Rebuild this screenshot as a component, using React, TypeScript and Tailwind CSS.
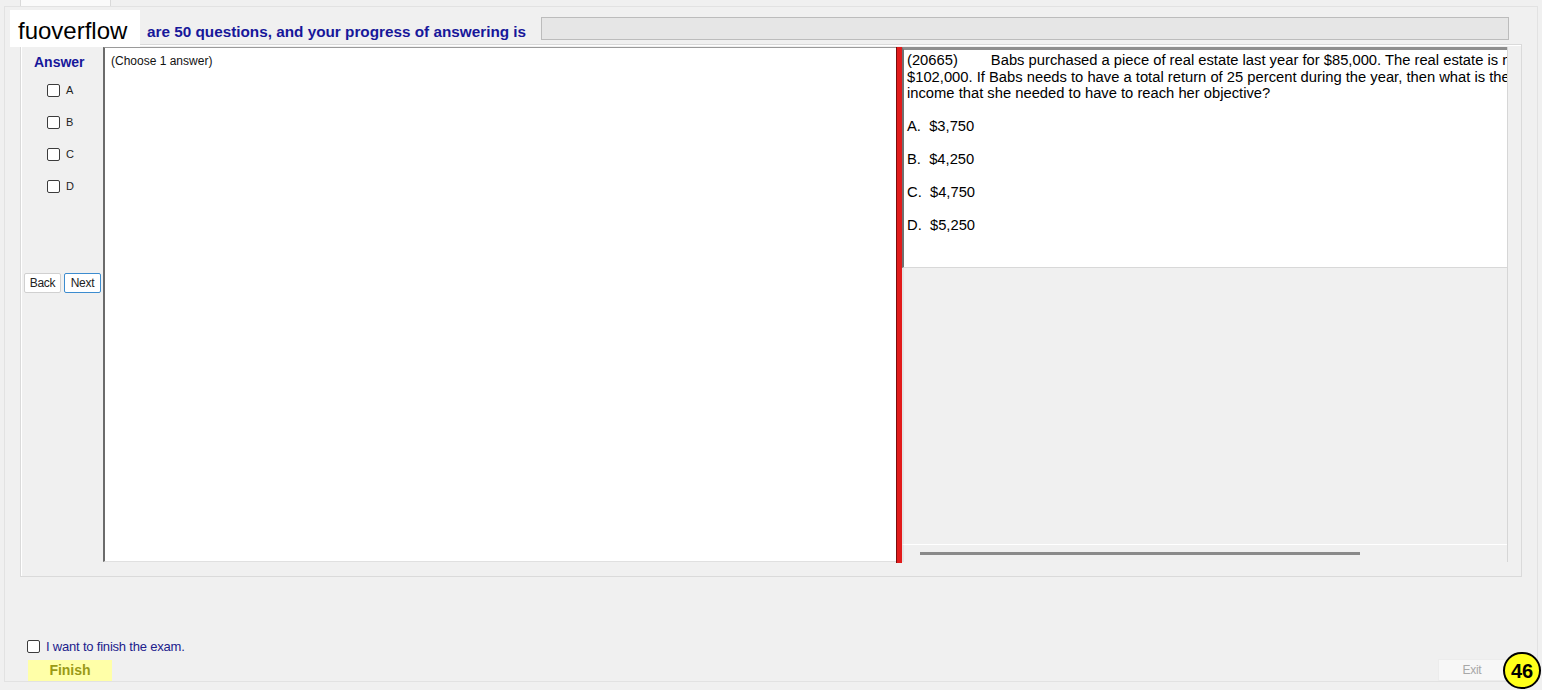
import React from 'react';

const Box: React.FC<{ className?: string }> = ({ className = '' }) => (
  <div className={`w-[13px] h-[13px] rounded-[2px] border border-[#3c3c3c] bg-white ${className}`} />
);

const App: React.FC = () => {
  const choices = ['A', 'B', 'C', 'D'];
  const options = ['A.  $3,750', 'B.  $4,250', 'C.  $4,750', 'D.  $5,250'];

  return (
    <div className="relative w-[1542px] h-[690px] overflow-hidden bg-[#f0f0f0] font-['Liberation_Sans',Arial,sans-serif] text-black">
      {/* tab strip */}
      <div className="flex h-[6px] pl-[20px]">
        <div className="w-[91px] h-full bg-[#fafafa] border-x border-[#d9d9d9]" />
      </div>

      {/* tab page */}
      <div className="mx-[4px] h-[676px] flex flex-col border border-[#e2e2e2] bg-[#f0f0f0]">
        {/* header */}
        <div className="flex h-[23px] mt-[10px]">
          <div className="self-end pl-[142px] w-[536px] shrink-0 text-[15.3px] leading-[17px] font-bold text-[#17179a] whitespace-nowrap">
            are 50 questions, and your progress of answering is
          </div>
          <div className="w-[968px] h-[23px] bg-[#e6e6e6] border border-[#bcbcbc]" />
        </div>

        {/* group panel */}
        <div className="ml-[15px] mt-[4px] w-[1502px] h-[533px] border border-[#dadada] shadow-[inset_1px_1px_0_#ffffff] flex pt-[2px]">
          {/* left column */}
          <div className="w-[82px] shrink-0 flex flex-col">
            <div className="mt-[7px] pl-[13px] text-[14px] leading-[16px] font-bold text-[#17179a]">Answer</div>
            <div className="mt-[14px] flex flex-col gap-[19px] pl-[26px]">
              {choices.map((c) => (
                <div key={c} className="flex items-center h-[13px]">
                  <Box />
                  <span className="ml-[6px] text-[11px] leading-[13px] text-[#222]">{c}</span>
                </div>
              ))}
            </div>
            <div className="mt-[80px] flex gap-[3px] pl-[3px]">
              <button className="w-[37px] h-[20px] bg-white border border-[#d0d0d0] rounded-[2px] text-[12px] leading-[18px] text-[#222] tracking-[-0.3px]">Back</button>
              <button className="w-[37px] h-[20px] bg-white border border-[#3c8ccf] rounded-[2px] text-[12px] leading-[18px] text-[#222] tracking-[-0.3px]">Next</button>
            </div>
          </div>

          {/* answer text box */}
          <div className="w-[793px] h-[515px] bg-white border-l-2 border-l-[#6b6b6b] border-t border-t-[#9a9a9a] border-b border-b-[#e0e0e0] pl-[6px] pt-[6px] text-[12px] leading-[14px] text-[#111]">
            (Choose 1 answer)
          </div>

          {/* splitter */}
          <div className="w-[6px] h-[516px] bg-[#e21b1b] border-l border-[#7a0d0d]" />

          {/* question panel */}
          <div className="w-[606px] h-[515px] flex flex-col border-r border-[#d6d6d6]">
            <div className="h-[221px] bg-white border-t-[3px] border-t-[#8e8e8e] border-l-2 border-l-[#707070] border-b border-b-[#d8d8d8] overflow-hidden pl-[3px] pt-[2px] text-[14.75px] leading-[16.5px] whitespace-nowrap">
              <div>
                (20665)<span className="ml-[33px]">Babs purchased a piece of real estate last year for $85,000. The real estate is n</span>
              </div>
              <div>$102,000. If Babs needs to have a total return of 25 percent during the year, then what is the</div>
              <div>income that she needed to have to reach her objective?</div>
              {options.map((o) => (
                <div key={o} className="mt-[16.5px] whitespace-pre">{o}</div>
              ))}
            </div>
            <div className="flex-1 border-l-2 border-l-[#e4e4e4]" />
            <div className="h-[18px] border-t border-white border-l-2 border-l-[#e4e4e4] flex items-center pl-[16px]">
              <div className="w-[440px] h-[3px] bg-[#8a8a8a]" />
            </div>
          </div>
        </div>

        {/* footer */}
        <div className="mt-auto pl-[22px] pr-[31px]">
          <div className="flex items-center h-[14px]">
            <Box />
            <span className="ml-[6px] mt-[2px] text-[13px] leading-[14px] tracking-[-0.2px] text-[#20208c]">I want to finish the exam.</span>
          </div>
          <div className="mt-[6px] flex justify-between items-end">
            <button className="ml-[1px] w-[84px] h-[21px] bg-[#ffffa8] text-[14px] font-bold text-[#9a9a16] leading-[21px]">Finish</button>
            <button className="w-[68px] h-[22px] bg-[#f7f7f7] border border-[#ececec] text-[12px] text-[#a8a8a8] leading-[20px] tracking-[-0.3px]">Exit</button>
          </div>
        </div>
      </div>

      {/* watermark */}
      <div className="absolute left-[10px] top-[10px] w-[130px] h-[37px] bg-white flex items-center pl-[8px] pt-[5px] text-[24px] leading-[28px] text-black">
        fuoverflow
      </div>

      {/* badge */}
      <div className="absolute left-[1503px] top-[652px] w-[38px] h-[37px] rounded-full bg-[#ffff1a] border-2 border-black flex items-center justify-center text-[20px] font-bold leading-none">
        46
      </div>
    </div>
  );
};

export default App;
